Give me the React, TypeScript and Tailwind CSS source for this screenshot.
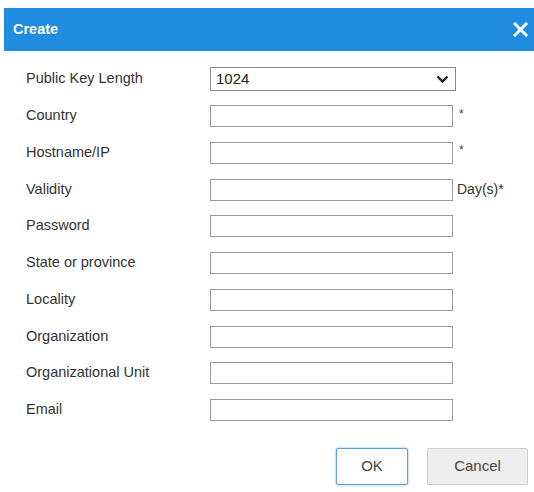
import React from "react";

const rows: { label: string; suffix?: string }[] = [
  { label: "Country", suffix: "*" },
  { label: "Hostname/IP", suffix: "*" },
  { label: "Validity", suffix: "Day(s)*" },
  { label: "Password" },
  { label: "State or province" },
  { label: "Locality" },
  { label: "Organization" },
  { label: "Organizational Unit" },
  { label: "Email" },
];

export default function App() {
  return (
    <div
      className="w-[534px] h-[492px] bg-white overflow-hidden"
      style={{ fontFamily: '"Liberation Sans", Arial, sans-serif' }}
    >
      <div className="mt-[8px] ml-[4px] h-[43px] bg-[#1f8ce0] flex items-center justify-between pl-[9px] pr-[6px]">
        <span className="text-white font-bold text-[14.5px]">Create</span>
        <svg width="15" height="15" viewBox="0 0 15 15">
          <path d="M2 2 L13 13 M13 2 L2 13" stroke="white" strokeWidth="3" strokeLinecap="square" />
        </svg>
      </div>

      <div className="pl-[26px] pt-[16px]">
        <div className="flex items-center h-[24px]">
          <div className="w-[184px] text-[14.5px] text-[#333]">Public Key Length</div>
          <div className="w-[246px] h-[24px] border border-[#8a8a8a] flex items-center justify-between pl-[5px] pr-[6px]">
            <span className="text-[15px] text-[#222]">1024</span>
            <svg width="13" height="9" viewBox="0 0 13 9">
              <path d="M1.5 1.5 L6.5 6.5 L11.5 1.5" stroke="#222" strokeWidth="2.4" fill="none" />
            </svg>
          </div>
        </div>

        <div className="flex flex-col gap-[14.75px] mt-[14px]">
          {rows.map((r) => (
            <div key={r.label} className="flex items-center h-[22px]">
              <div className="w-[184px] text-[14.5px] text-[#333]">{r.label}</div>
              <div className="w-[243px] h-[22px] border border-[#9a9a9a] bg-white" />
              {r.suffix && (
                <span
                  className={
                    r.suffix === "*"
                      ? "ml-[6px] text-[12px] text-[#444] -mt-[5px]"
                      : "ml-[4px] text-[14px] text-[#333]"
                  }
                >
                  {r.suffix}
                </span>
              )}
            </div>
          ))}
        </div>
      </div>

      <div className="flex justify-end pr-[6px] mt-[27px] gap-[19px]">
        <button className="w-[72px] h-[37px] bg-white border border-[#5d9fdc] rounded-[2px] shadow-[0_0_3px_#8bbbe8] text-[15px] text-[#444]">
          OK
        </button>
        <button className="w-[101px] h-[37px] bg-[#eeeeee] border border-[#cdcdcd] rounded-[2px] text-[15px] text-[#444]">
          Cancel
        </button>
      </div>
    </div>
  );
}
